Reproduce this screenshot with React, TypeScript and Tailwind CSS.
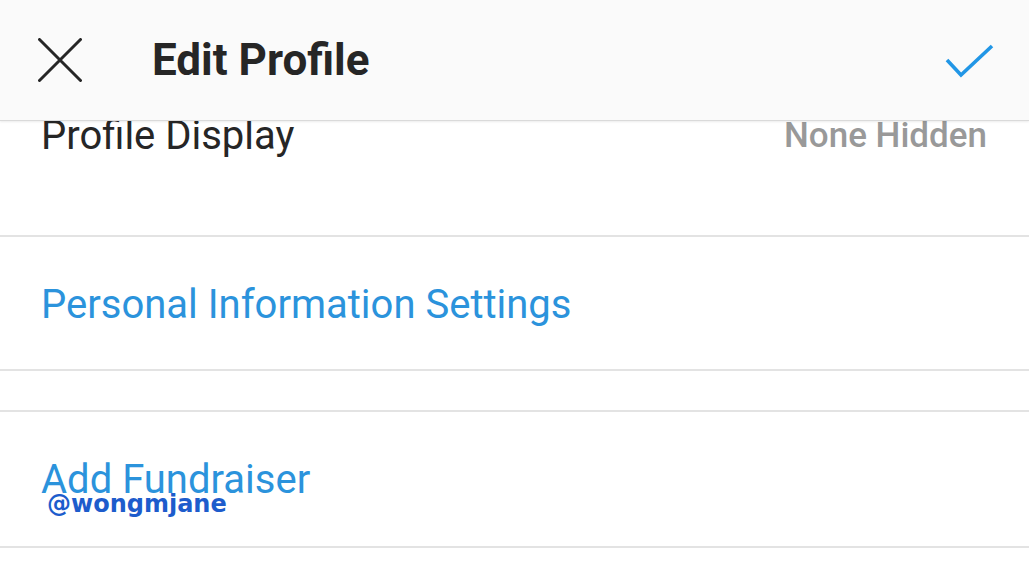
export default function App() {
  return (
    <div className="w-[1029px] h-[578px] overflow-hidden bg-white font-['Roboto',sans-serif]">
      <header className="relative z-10 h-[121px] bg-[#fafafa] border-b border-[#dadada] shadow-[0_1px_2px_rgba(0,0,0,0.08)] flex items-center pl-[38px] pr-[34px]">
        <svg width="44" height="44" viewBox="0 0 44 44" className="shrink-0">
          <path d="M1.5 1.5 L42.5 42.5 M42.5 1.5 L1.5 42.5" stroke="#262626" strokeWidth="3" strokeLinecap="round" fill="none" />
        </svg>
        <h1 className="ml-[70px] text-[44px] leading-none font-bold text-[#262626]">Edit Profile</h1>
        <svg width="50" height="36" viewBox="0 0 50 36" className="ml-auto shrink-0 mt-[4px]">
          <path d="M2 16 L16 31 L47 2" stroke="#2196e6" strokeWidth="3.6" fill="none" strokeLinejoin="miter" />
        </svg>
      </header>

      <div className="h-[116px] border-b-2 border-[#e3e3e3] flex justify-between pl-[41px] pr-[42px]">
        <span className="text-[40px] leading-[30px] text-[#262626]">Profile Display</span>
        <span className="text-[35px] leading-[30px] font-medium text-[#999999]">None Hidden</span>
      </div>

      <div className="h-[134px] border-b-2 border-[#e3e3e3] flex items-center px-[41px] pt-[4px]">
        <span className="text-[40px] leading-none text-[#2b93dc]">Personal Information Settings</span>
      </div>

      <div className="h-[41px] border-b-2 border-[#e3e3e3]" />

      <div className="relative h-[136px] border-b-2 border-[#e3e3e3] flex items-center px-[41px] pt-[2px]">
        <span className="text-[40px] leading-none text-[#2b93dc]">Add Fundraiser</span>
        <span className="absolute left-[47px] top-[80px] text-[24px] leading-none font-bold text-[#1d5ccc] font-['DejaVu_Sans',sans-serif]">@wongmjane</span>
      </div>
    </div>
  );
}
